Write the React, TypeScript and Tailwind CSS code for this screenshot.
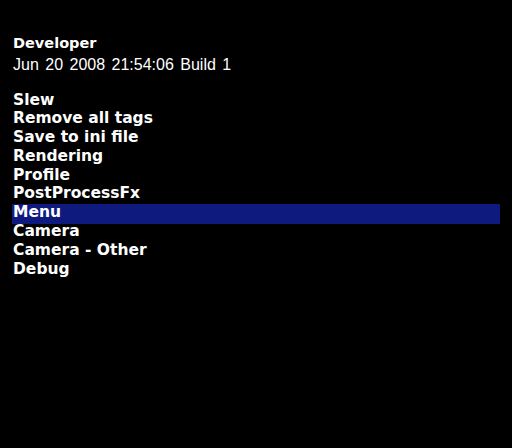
const items = [
  'Slew',
  'Remove all tags',
  'Save to ini file',
  'Rendering',
  'Profile',
  'PostProcessFx',
  'Menu',
  'Camera',
  'Camera - Other',
  'Debug',
];

const selected = 'Menu';

export default function App() {
  return (
    <div className="w-[512px] h-[448px] bg-black text-white pl-[13px] pr-[12px] pt-[33px] font-['DejaVu_Sans',sans-serif]">
      {/* Header */}
      <div className="text-[14.5px] font-bold leading-[20px]">Developer</div>
      <div className="mt-[1px] font-['Liberation_Sans',sans-serif] text-[16px] leading-[22px] [word-spacing:2px]">
        Jun 20 2008 21:54:06 Build 1
      </div>

      {/* Menu list */}
      <ul className="mt-[14.5px] -ml-[1px]">
        {items.map((item) => (
          <li
            key={item}
            className="relative h-[18.8px] pl-[1px] text-[15.5px] font-bold leading-[18.8px]"
          >
            {item === selected && (
              <span className="absolute inset-x-0 top-[0.7px] h-[20px] bg-[#0f1a7e]"></span>
            )}
            <span className="relative">{item}</span>
          </li>
        ))}
      </ul>
    </div>
  );
}
